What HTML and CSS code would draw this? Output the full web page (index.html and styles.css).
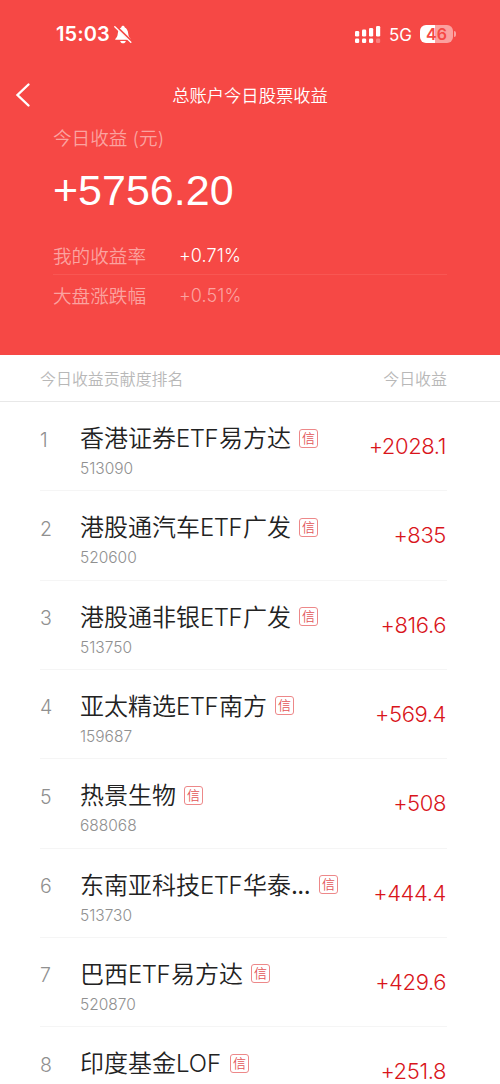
FILE: index.html
```html
<!DOCTYPE html>
<html lang="zh-CN">
<head>
<meta charset="utf-8">
<title>总账户今日股票收益</title>
<link rel="stylesheet" href="styles.css">
</head>
<body>
<header class="hero">
  <div class="status">
    <span class="time">15:03</span>
    <svg class="bell" width="18" height="19" viewBox="0 0 18 19"><path d="M1.200 14.800c0-1.500 2.200-2.200 2.500-5.800C4 5.300 5.500 3 7.200 2.400 7.400 1.200 8.200.7 9 .7s1.600.5 1.800 1.700C12.500 3 14 5.300 14.300 9c.3 3.600 2.500 4.300 2.500 5.800z" fill="#fff"/><path d="M6.200 15.900h5.600C11.500 17.400 10.400 18.300 9 18.300s-2.500-.9-2.800-2.400z" fill="#fff"/><path d="M1.800 1.200 17.600 16.700" stroke="#f64845" stroke-width="2.600"/><path d="M.8 1.700 16.800 17.300" stroke="#fff" stroke-width="1.400" stroke-linecap="round"/></svg>
    <svg class="signal" width="27" height="19" viewBox="0 0 27 19" fill="#fff"><rect x="1" y="6" width="4.200" height="5.500" rx="1.300"/><rect x="8" y="4.500" width="4.200" height="7" rx="1.300"/><rect x="15" y="3" width="4.200" height="8.500" rx="1.300"/><rect x="22" y="1" width="4.200" height="10.500" rx="1.300"/><rect x="1" y="13.500" width="4.200" height="4.500" rx="1.300"/><rect x="8" y="13.500" width="4.200" height="4.500" rx="1.300"/><rect x="15" y="13.500" width="4.200" height="4.500" rx="1.300"/><rect x="22" y="13.500" width="4.200" height="4.500" rx="1.300" opacity=".3"/></svg>
    <span class="network">5G</span>
    <span class="battery">46</span>
    <span class="battery-tip"></span>
  </div>
  <nav class="nav">
    <svg class="back" width="18" height="26" viewBox="0 0 18 26"><path d="M14.500 2.500 3.500 13l11 10.500" fill="none" stroke="#fff" stroke-width="2.400" stroke-linecap="round" stroke-linejoin="miter"/></svg>
    <h1 class="title">总账户今日股票收益</h1>
  </nav>
  <section class="summary">
    <div class="caption">今日收益 (元)</div>
    <div class="total">+5756.20</div>
    <div class="rate"><span class="rate-label">我的收益率</span><span class="rate-value rate-own">+0.71%</span></div>
    <div class="rate rate-market"><span class="rate-label">大盘涨跌幅</span><span class="rate-value">+0.51%</span></div>
  </section>
</header>
<main>
  <div class="list-head"><span>今日收益贡献度排名</span><span>今日收益</span></div>
  <ol class="list">
    <li class="row"><span class="rank">1</span><div class="stock"><div class="name">香港证券<b>ETF</b>易方达<i class="tag">信</i></div><div class="code">513090</div></div><span class="gain">+2028.1</span></li>
    <li class="row"><span class="rank">2</span><div class="stock"><div class="name">港股通汽车<b>ETF</b>广发<i class="tag">信</i></div><div class="code">520600</div></div><span class="gain">+835</span></li>
    <li class="row"><span class="rank">3</span><div class="stock"><div class="name">港股通非银<b>ETF</b>广发<i class="tag">信</i></div><div class="code">513750</div></div><span class="gain">+816.6</span></li>
    <li class="row"><span class="rank">4</span><div class="stock"><div class="name">亚太精选<b>ETF</b>南方<i class="tag">信</i></div><div class="code">159687</div></div><span class="gain">+569.4</span></li>
    <li class="row"><span class="rank">5</span><div class="stock"><div class="name">热景生物<i class="tag">信</i></div><div class="code">688068</div></div><span class="gain">+508</span></li>
    <li class="row"><span class="rank">6</span><div class="stock"><div class="name">东南亚科技<b>ETF</b>华泰<b class="more">...</b><i class="tag">信</i></div><div class="code">513730</div></div><span class="gain">+444.4</span></li>
    <li class="row"><span class="rank">7</span><div class="stock"><div class="name">巴西<b>ETF</b>易方达<i class="tag">信</i></div><div class="code">520870</div></div><span class="gain">+429.6</span></li>
    <li class="row"><span class="rank">8</span><div class="stock"><div class="name">印度基金<b class="lof">LOF</b><i class="tag">信</i></div></div><span class="gain">+251.8</span></li>
  </ol>
</main>
</body>
</html>
```
FILE: styles.css
```css
* { box-sizing: border-box; }
body {
  margin: 0;
  height: 1084px;
  overflow: hidden;
  background: #fff;
  font-family: Inter, "Noto Sans CJK SC", sans-serif;
  font-weight: 350;
}
.hero { height: 355px; background: #f64845; color: #fff; }
.status { display: flex; align-items: center; height: 68px; padding: 0 44px 0 56px; }
.time { font-size: 20px; font-weight: 600; width: 58px; letter-spacing: 0.1px; }
.signal { margin-left: 222px; }
.network { width: 31px; margin-left: 8px; padding-top: 1px; font-size: 17px; font-weight: 400; letter-spacing: -0.2px; }
.battery {
  width: 33px; height: 18px; border-radius: 6px;
  background: linear-gradient(90deg, #fff 46%, #fba19f 46%);
  color: #f64845; font-size: 16px; font-weight: 600; line-height: 18px; text-align: center;
}
.battery-tip { width: 2px; height: 6px; margin-left: 1px; border-radius: 0 2px 2px 0; background: #fba19f; }
.nav { display: grid; grid-template-columns: 40px 1fr 40px; align-items: center; height: 54px; padding: 0 15px 0 14px; }
.title { margin: 0; padding: 0 0 2px 1px; font-size: 17.300px; font-weight: 350; text-align: center; }
.summary { padding: 2px 53px 0; }
.caption { height: 28px; font-size: 18.600px; line-height: 28px; color: #fba3a0; }
.total { height: 84px; font-family: "Liberation Sans", sans-serif; font-size: 43px; font-weight: 400; line-height: 77px; }
.rate { display: flex; height: 39px; align-items: center; font-size: 18.600px; color: #fba3a0; border-bottom: 1px solid #f85753; }
.rate-market { height: 40px; border: 0; }
.rate-label { width: 126px; padding-bottom: 2px; }
.rate-value { font-size: 18px; letter-spacing: 0.1px; padding-top: 1px; }
.rate-own { color: #fff; }
.list-head {
  display: flex; justify-content: space-between; align-items: center;
  height: 47px; padding: 0 53px 0 40px; border-bottom: 1px solid #e8e8e8;
  font-size: 15.950px; color: #b8b8b8;
}
.list { margin: 0; padding: 0 53px 0 40px; list-style: none; }
.row { display: flex; height: 89.330px; border-bottom: 1px solid #f5f5f5; }
.rank { width: 40px; padding-top: 22.500px; font-size: 19.500px; line-height: 30px; color: #909090; }
.stock { flex: 1; white-space: nowrap; }
.name { display: flex; align-items: center; height: 38px; margin-top: 18px; font-size: 24px; line-height: 38px; color: #222; }
.name b { width: 43px; font-weight: 300; letter-spacing: -0.5px; }
.name .lof { width: 46px; letter-spacing: 0; }
.name .more { width: 20px; letter-spacing: -0.6px; font-weight: 400; }
.tag {
  width: 19px; height: 19px; margin: -2px 0 0 8px; border: 1px solid #ed8889; border-radius: 3px;
  color: #e25558; font-size: 13px; font-style: normal; line-height: 16px; text-align: center;
}
.code { font-size: 15.500px; line-height: 22px; color: #909090; }
.gain { padding: 29px 1px 0 0; font-size: 22px; line-height: 30px; letter-spacing: -0.4px; color: #d9151b; }
```
